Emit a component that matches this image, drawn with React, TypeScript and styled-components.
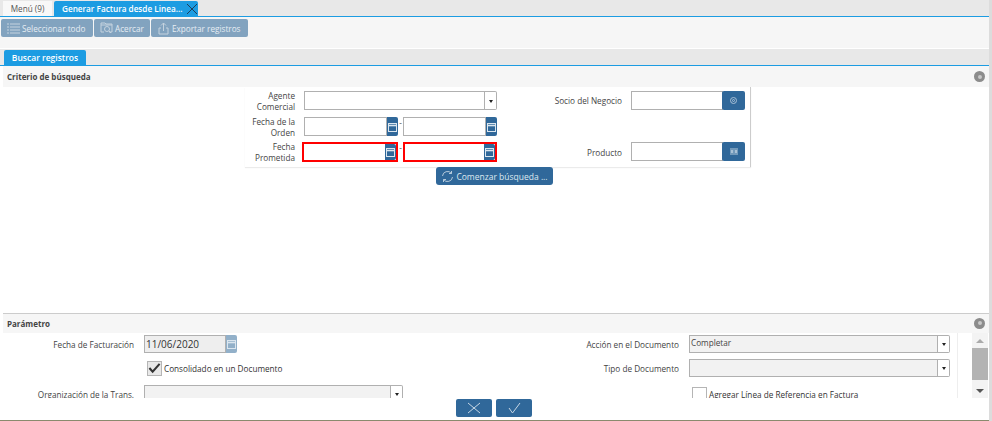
import React from "react";
import styled, { createGlobalStyle } from "styled-components";

const Global = createGlobalStyle`
  html, body { margin: 0; padding: 0; background: #fff; overflow: hidden; }
  body { font-family: "Open Sans", "Noto Sans", sans-serif; font-size: 8.2px; color: #333; }
  * { box-sizing: border-box; }
`;
const Page = styled.div`
  width: 992px; height: 421px; display: flex; flex-direction: column; background: #fff;
  border-right: 3px solid #dcdcdc;
`;
const TabBar = styled.div`
  height: 17px; flex: none; display: flex; align-items: flex-end; gap: 2px; padding: 1px 0 0 3px;
  background: #e8e8e8; border-bottom: 1px solid #1c9ce2;
`;
const MenuTab = styled.div`
  width: 49px; height: 15px; background: #f8f8f8; color: #555; display: flex; align-items: center; justify-content: center; font-size: 8.2px;
`;
const ActiveTab = styled.div`
  width: 144px; height: 15px; background: #1c9ce2; color: #fff; display: flex; align-items: center; padding-left: 8px;
  font-size: 8.2px; font-weight: 600; justify-content: space-between; border-radius: 2px 2px 0 0; white-space: nowrap;
`;
const Toolbar = styled.div`
  height: 32px; flex: none; background: #f6f6f6; display: flex; align-items: flex-start; padding: 2px 0 0 1px; gap: 1px;
  border-bottom: 1px solid #fff;
`;
const ToolButton = styled.div<{ $w: number }>`
  width: ${(p) => p.$w}px; height: 18px; background: #82a3bf; color: #e6edf3; border-radius: 2px; display: flex; align-items: center;
  padding-left: 6px; gap: 2px; font-size: 8.2px; white-space: nowrap;
`;
const SubTabBar = styled.div`
  height: 17px; flex: none; background: #e8e8e8; padding: 1px 0 0 4px; border-bottom: 1px solid #1c9ce2; display: flex; align-items: flex-end;
`;
const SubTab = styled.div`
  width: 82px; height: 15px; background: #1c9ce2; color: #fff; font-weight: 600; font-size: 8.5px; display: flex; align-items: center; justify-content: center;
  border-radius: 2px 2px 0 0;
`;
const SectionHead = styled.div<{ $h: number; $pb?: number }>`
  height: ${(p) => p.$h}px; flex: none; margin-left: 3px; background: #f6f6f6; display: flex; align-items: center; justify-content: space-between;
  padding: 0 4px ${(p) => p.$pb ?? 0}px 4px; font-weight: 700; font-size: 8px; color: #444;
`;
const Collapse = styled.div`
  width: 11px; height: 11px; border-radius: 50%; background: #8c8c8c; display: flex; align-items: center; justify-content: center;
  &::after { content: ""; width: 4px; height: 4px; background: #c8c8c8; border-radius: 50%; }
`;
const SearchArea = styled.div`
  height: 226px; flex: none; display: flex; flex-direction: column; align-items: flex-start;
`;
const SearchPanel = styled.div`
  margin-left: 245px; width: 506px; height: 80px; padding: 4px 5px 0 0; display: grid;
  grid-template-columns: 50px 202px 125px 123px; grid-template-rows: 26px 25px 20px; align-items: start;
  border-right: 1px solid #ccc; box-shadow: 0 1px 1px rgba(0,0,0,.08);
`;
const Label = styled.div<{ $h?: number }>`
  height: ${(p) => p.$h ?? 19}px; display: flex; align-items: center; justify-content: flex-end; text-align: right; line-height: 11px; color: #444; font-size: 8.2px; white-space: pre-line;
`;
const Field = styled.div`
  margin-left: 9px; height: 19px; display: flex; min-width: 0;
`;
const TextBox = styled.div`
  flex: 1; border: 1px solid #b0b0b0; background: #fff; min-width: 0; height: 100%;
`;
const ArrowBtn = styled.div`
  width: 12px; border: 1px solid #b0b0b0; border-left: none; border-radius: 0 2px 2px 0; background: #fff; display: flex; align-items: center; justify-content: center;
  &::after { content: ""; border: 2.5px solid transparent; border-top: 3px solid #222; margin-top: 3px; }
`;
const DatePair = styled.div<{ $h: number }>`
  margin-left: 9px; height: ${(p) => p.$h}px; display: flex; align-items: stretch;
`;
const Dash = styled.span`
  width: 5px; text-align: center; line-height: 11px; color: #555;
`;
const DateBox = styled.div<{ $red?: boolean }>`
  width: 94px; display: flex; ${(p) => p.$red && "border: 2px solid #f00; margin-left: -2px; width: 96px; &:last-child { margin-left: 0; width: 94px; }"}
`;
const DateInput = styled.div<{ $red?: boolean }>`
  flex: 1; background: #fff; ${(p) => !p.$red && "border: 1px solid #b0b0b0;"}
`;
const CalBtn = styled.div<{ $pale?: boolean }>`
  width: 11px; flex: none; background: ${(p) => (p.$pale ? "#92b0c9" : "#30689a")}; border-radius: 0 2px 2px 0; display: flex; align-items: center; justify-content: center;
`;
const LookupBtn = styled.div`
  width: 23px; flex: none; margin-left: -1px; background: #30689a; border-radius: 2px; display: flex; align-items: center; justify-content: center;
`;
const SearchRow = styled.div`
  margin-left: 436px; width: 117px; height: 18px; background: #30689a; border-radius: 3px; color: #dfe8f0; display: flex; align-items: center;
  justify-content: center; gap: 2px; font-size: 8.5px; flex: none;
`;
const Divider = styled.div`
  height: 1px; flex: none; background: #ccc; margin-left: 3px;
`;
const ParamArea = styled.div`
  height: 65px; flex: none; margin-left: 3px; overflow: hidden; display: flex;
`;
const ParamGrid = styled.div`
  width: 955px; height: 65px; padding-top: 2px; display: grid; flex: none; border-right: 1px solid #eee; align-items: start;
  grid-template-columns: 131px 141px 290px 114px 278px; grid-template-rows: 24px 26px 18px; align-content: start;
`;
const DateField = styled.div`
  margin-left: 10px; width: 93px; height: 18px; display: flex;
`;
const DateValue = styled.div`
  flex: 1; background: #eee; border: 1px solid #b0b0b0; font-size: 10px; line-height: 17px; padding-left: 1px; color: #333;
`;
const Check = styled.div`
  height: 18px; display: flex; align-items: center; gap: 2px; margin-left: 13px; color: #333; font-size: 8.2px; white-space: nowrap;
`;
const CheckBox = styled.div`
  width: 15px; height: 15px; border: 1px solid #b5b5b5; background: #e8e8e8; flex: none; display: flex; align-items: center; justify-content: center;
`;
const EmptyBox = styled(CheckBox)`
  background: #fff;
`;
const Select = styled.div<{ $w: number }>`
  margin-left: 10px; width: ${(p) => p.$w}px; display: flex; height: 18px;
`;
const SelectBox = styled.div`
  flex: 1; background: #f2f2f2; border: 1px solid #b0b0b0; padding-left: 1px; line-height: 14px; font-size: 8.2px; color: #444;
`;
const ScrollBar = styled.div`
  width: 16px; margin-left: 14px; flex: none; display: flex; flex-direction: column; align-items: center; background: #f3f3f3;
`;
const ScrollBtn = styled.div<{ $down?: boolean }>`
  height: 15px; flex: none; width: 100%; display: flex; align-items: center; justify-content: center;
  &::after {
    content: ""; border: 4px solid transparent;
    ${(p) => (p.$down ? "border-top: 4px solid #555; margin-top: 4px;" : "border-bottom: 4px solid #aaa; margin-bottom: 4px;")}
  }
`;
const Thumb = styled.div`
  height: 32px; width: 100%; flex: none; background: #b3b3b3;
`;
const ScrollSpace = styled.div`
  flex: 1;
`;
const Footer = styled.div`
  height: 23px; flex: none; display: flex; gap: 4px; padding: 1px 0 0 456px; border-bottom: 1px solid #8a8a6e;
`;
const FootBtn = styled.div`
  width: 36px; height: 18px; background: #30689a; border-radius: 2px; display: flex; align-items: center; justify-content: center;
`;

const Cal = () => (
  <svg width="9" height="10" viewBox="0 0 9 10" fill="none" stroke="#dbe6ef" strokeWidth="1"><rect x="0.5" y="1.5" width="8" height="8" /><path d="M0.5 3.5h8" strokeWidth="1.6" /></svg>
);

export default function App() {
  return (
    <>
      <Global />
      <Page>
        <TabBar>
          <MenuTab>Menú (9)</MenuTab>
          <ActiveTab>
            Generar Factura desde Linea...
            <svg width="12" height="12" viewBox="0 0 12 12" stroke="#1d3f5c" strokeWidth="1"><path d="M1 1l10 10M11 1L1 11" /></svg>
          </ActiveTab>
        </TabBar>
        <Toolbar>
          <ToolButton $w={92}>
            <svg width="13" height="11" viewBox="0 0 13 11" stroke="#c5d3df" strokeWidth="1"><path d="M0 1h2M3 1h10M0 4h2M3 4h10M0 7h2M3 7h10M0 10h2M3 10h10" /></svg>
            Seleccionar todo
          </ToolButton>
          <ToolButton $w={56}>
            <svg width="13" height="12" viewBox="0 0 13 12" fill="none" stroke="#c5d3df" strokeWidth="1"><path d="M1 3V1h4l1 1h6v8H9M1 3h11M1 3v7h3" /><circle cx="7" cy="7" r="2.5" /><path d="M9 9l2 2" /></svg>
            Acercar
          </ToolButton>
          <ToolButton $w={97}>
            <svg width="13" height="13" viewBox="0 0 13 13" fill="none" stroke="#c5d3df" strokeWidth="1"><path d="M2 6v6h9V6H9M4 6H2M6.5 9V1M4 3.5L6.5 1 9 3.5" /></svg>
            Exportar registros
          </ToolButton>
        </Toolbar>
        <SubTabBar>
          <SubTab>Buscar registros</SubTab>
        </SubTabBar>
        <SectionHead $h={21}>
          Criterio de búsqueda
          <Collapse />
        </SectionHead>
        <SearchArea>
          <SearchPanel>
            <Label $h={20}>{"Agente\nComercial"}</Label>
            <Field><TextBox /><ArrowBtn /></Field>
            <Label>Socio del Negocio</Label>
            <Field>
              <TextBox />
              <LookupBtn>
                <svg width="7" height="7" viewBox="0 0 7 7" fill="none" stroke="#a9c1d6"><circle cx="3.5" cy="3.5" r="3" /><circle cx="3.5" cy="3.5" r="1" /></svg>
              </LookupBtn>
            </Field>
            <Label $h={20}>{"Fecha de la\nOrden"}</Label>
            <DatePair $h={19}>
              <DateBox><DateInput /><CalBtn><Cal /></CalBtn></DateBox>
              <Dash>-</Dash>
              <DateBox><DateInput /><CalBtn><Cal /></CalBtn></DateBox>
            </DatePair>
            <div />
            <div />
            <Label $h={20}>{"Fecha\nPrometida"}</Label>
            <DatePair $h={20}>
              <DateBox $red><DateInput $red /><CalBtn><Cal /></CalBtn></DateBox>
              <Dash>-</Dash>
              <DateBox $red><DateInput $red /><CalBtn><Cal /></CalBtn></DateBox>
            </DatePair>
            <Label $h={20}>Producto</Label>
            <Field>
              <TextBox />
              <LookupBtn>
                <svg width="8" height="7" viewBox="0 0 8 7" fill="#a9c1d6"><path d="M0 0h8v7H0z" opacity=".55" /><path d="M1 2h2v3H1zM5 2h2v3H5z" /></svg>
              </LookupBtn>
            </Field>
          </SearchPanel>
          <SearchRow>
            <svg width="13" height="13" viewBox="0 0 13 13" fill="none" stroke="#b7cbdc" strokeWidth="1"><path d="M1.5 6a5 5 0 0 1 9-2.5M11.5 7a5 5 0 0 1-9 2.5M10.5 1v2.5H8M2.5 12V9.5H5" /></svg>
            Comenzar búsqueda ...
          </SearchRow>
        </SearchArea>
        <Divider />
        <SectionHead $h={19} $pb={1}>
          Parámetro
          <Collapse />
        </SectionHead>
        <ParamArea>
          <ParamGrid>
            <Label $h={18}>Fecha de Facturación</Label>
            <DateField><DateValue>11/06/2020</DateValue><CalBtn $pale><Cal /></CalBtn></DateField>
            <div />
            <Label $h={18}>Acción en el Documento</Label>
            <Select $w={261}><SelectBox>Completar</SelectBox><ArrowBtn /></Select>
            <div />
            <Check>
              <CheckBox>
                <svg width="14" height="12" viewBox="0 0 14 12" fill="none" stroke="#333" strokeWidth="2.2"><path d="M1.5 6l3.5 4L12.5 1.5" /></svg>
              </CheckBox>
              Consolidado en un Documento
            </Check>
            <div />
            <Label $h={18}>Tipo de Documento</Label>
            <Select $w={261}><SelectBox /><ArrowBtn /></Select>
            <Label $h={18}>Organización de la Trans.</Label>
            <Select $w={259}><SelectBox /><ArrowBtn /></Select>
            <div />
            <div />
            <Check>
              <EmptyBox />
              Agregar Línea de Referencia en Factura
            </Check>
          </ParamGrid>
          <ScrollBar>
            <ScrollBtn />
            <Thumb />
            <ScrollSpace />
            <ScrollBtn $down />
          </ScrollBar>
        </ParamArea>
        <Footer>
          <FootBtn>
            <svg width="14" height="12" viewBox="0 0 14 12" stroke="#c7d7e5" strokeWidth="1"><path d="M1 1l12 10M13 1L1 11" /></svg>
          </FootBtn>
          <FootBtn>
            <svg width="14" height="12" viewBox="0 0 14 12" fill="none" stroke="#c7d7e5" strokeWidth="1"><path d="M2 6l3.5 5L13 1" /></svg>
          </FootBtn>
        </Footer>
      </Page>
    </>
  );
}
